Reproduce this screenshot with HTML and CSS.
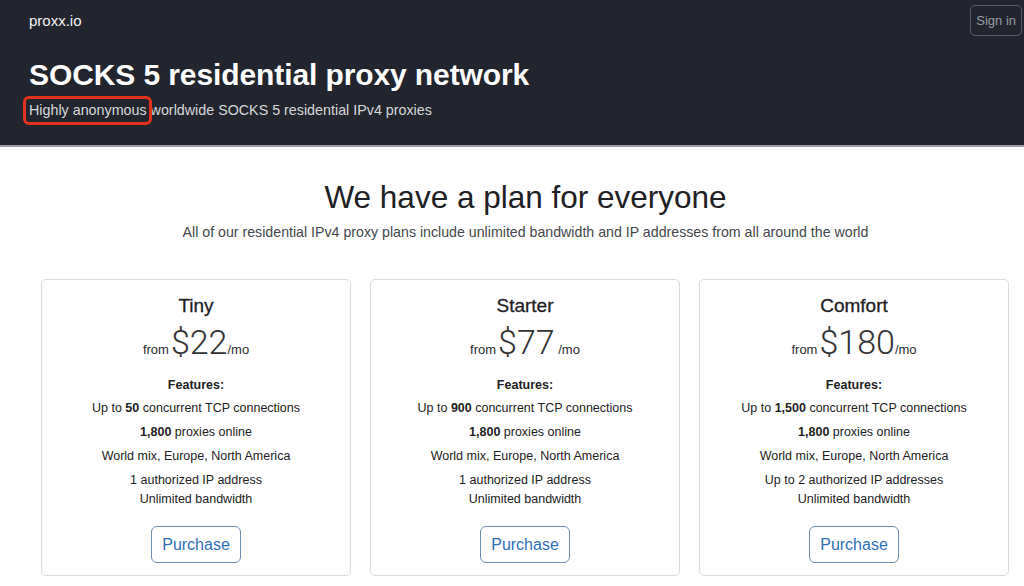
FILE: index.html
```html
<!DOCTYPE html>
<html>
<head>
<meta charset="utf-8">
<link rel="stylesheet" href="styles.css">
</head>
<body>
<header class="hero">
  <div class="topbar">
    <span class="brand">proxx.io</span>
    <a class="signin">Sign in</a>
  </div>
  <h1 class="hero-title">SOCKS 5 residential proxy network</h1>
  <p class="hero-sub"><span class="mark">Highly anonymous</span> worldwide SOCKS 5 residential IPv4 proxies</p>
</header>
<main class="plans">
  <h2 class="plans-title">We have a plan for everyone</h2>
  <p class="plans-sub">All of our residential IPv4 proxy plans include unlimited bandwidth and IP addresses from all around the world</p>
  <div class="cards">
    <div class="card">
      <h3 class="card-name">Tiny</h3>
      <div class="price"><span class="from">from</span><span class="amount">$22</span><span class="per">/mo</span></div>
      <div class="feat-head">Features:</div>
      <p class="feat">Up to <b>50</b> concurrent TCP connections</p>
      <p class="feat"><b>1,800</b> proxies online</p>
      <p class="feat">World mix, Europe, North America</p>
      <p class="feat">1 authorized IP address</p>
      <p class="feat last">Unlimited bandwidth</p>
      <a class="buy">Purchase</a>
    </div>
    <div class="card">
      <h3 class="card-name">Starter</h3>
      <div class="price"><span class="from">from</span><span class="amount">$77</span><span class="per">&nbsp;/mo</span></div>
      <div class="feat-head">Features:</div>
      <p class="feat">Up to <b>900</b> concurrent TCP connections</p>
      <p class="feat"><b>1,800</b> proxies online</p>
      <p class="feat">World mix, Europe, North America</p>
      <p class="feat">1 authorized IP address</p>
      <p class="feat last">Unlimited bandwidth</p>
      <a class="buy">Purchase</a>
    </div>
    <div class="card">
      <h3 class="card-name">Comfort</h3>
      <div class="price"><span class="from">from</span><span class="amount">$180</span><span class="per">/mo</span></div>
      <div class="feat-head">Features:</div>
      <p class="feat">Up to <b>1,500</b> concurrent TCP connections</p>
      <p class="feat"><b>1,800</b> proxies online</p>
      <p class="feat">World mix, Europe, North America</p>
      <p class="feat">Up to 2 authorized IP addresses</p>
      <p class="feat last">Unlimited bandwidth</p>
      <a class="buy">Purchase</a>
    </div>
  </div>
</main>
</body>
</html>
```

FILE: styles.css
```css
* { box-sizing: border-box; }
html, body { margin: 0; padding: 0; }
body {
  font-family: "Liberation Sans", Arial, sans-serif;
  background: #fff;
  color: #212529;
  width: 1024px;
  height: 586px;
  overflow: hidden;
}
.hero {
  background: #22252d;
  height: 147px;
  padding: 5px 2px 0 29px;
  border-bottom: 2px solid #9a9ca0;
}
.topbar {
  display: flex;
  justify-content: space-between;
  align-items: flex-start;
  height: 45px;
}
.brand {
  color: #f2f2f2;
  font-size: 15px;
  margin-top: 7px;
}
.signin {
  color: #9a9ca2;
  font-size: 13px;
  border: 1px solid #5a5d65;
  border-radius: 5px;
  padding: 7px 5px 7px 5px;
  line-height: 15px;
}
.hero-title {
  margin: 7px 0 0 0;
  color: #fff;
  font-size: 30px;
  font-weight: bold;
  line-height: 36px;
  letter-spacing: -0.1px;
}
.hero-sub {
  margin: 7px 0 0 0;
  color: #d8d9db;
  font-size: 14.3px;
  line-height: 20px;
}
.mark {
  position: relative;
}
.mark::after {
  content: "";
  position: absolute;
  left: -6px;
  right: -5px;
  top: -6px;
  bottom: -7px;
  border: 3px solid #e2321e;
  border-radius: 6px;
}
.plans {
  padding: 0 14px 0 41px;
  text-align: center;
}
.plans-title {
  margin: 30px 0 0 0;
  font-size: 31.5px;
  font-weight: normal;
  line-height: 40px;
  color: #1e2024;
}
.plans-sub {
  margin: 5px 0 0 0;
  font-size: 14.2px;
  color: #45484d;
  line-height: 20px;
}
.cards {
  display: grid;
  grid-template-columns: repeat(3, 310px);
  gap: 19px;
  margin-top: 37px;
}
.card {
  border: 1px solid #dcdcdc;
  border-radius: 5px;
  height: 297px;
  padding-top: 14px;
  display: flex;
  flex-direction: column;
  align-items: center;
}
.card-name {
  margin: 0;
  font-size: 19px;
  font-weight: normal;
  line-height: 24px;
  color: #1e2024;
  -webkit-text-stroke: 0.3px #1e2024;
}
.price {
  margin-top: 4px;
  display: flex;
  align-items: baseline;
  color: #2a2c30;
  height: 40px;
}
.from, .per {
  font-size: 13px;
}
.amount {
  font-size: 34px;
  margin-left: 2px;
  color: #333;
  font-family: Roboto, "Liberation Sans", sans-serif;
  font-weight: 300;
}
.feat-head {
  margin-top: 15px;
  font-size: 12.5px;
  font-weight: bold;
  line-height: 16px;
  color: #222;
}
.feat {
  margin: 7px 0 0 0;
  font-size: 12.5px;
  line-height: 17px;
  color: #222;
}
.feat:nth-child(4) { margin-top: 6.5px; }
.feat.last { margin-top: 2px; }
.buy {
  margin-top: 18px;
  width: 90px;
  height: 37px;
  border: 1px solid #6b8fb3;
  border-radius: 6px;
  color: #2f6fb8;
  font-size: 16px;
  line-height: 35px;
}
```
